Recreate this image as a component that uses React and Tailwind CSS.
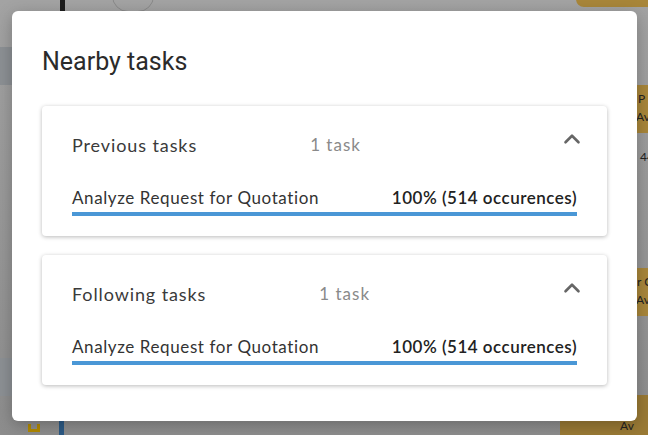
import { ChevronUp } from "lucide-react";

const tasks = [
  { id: "prev", title: "Previous tasks", name: "Analyze Request for Quotation", pct: 100, count: 514 },
  { id: "next", title: "Following tasks", name: "Analyze Request for Quotation", pct: 100, count: 514 },
];

function TaskCard({ t }) {
  return (
    <div className="bg-white rounded-[4px] shadow-[0_1px_4px_rgba(0,0,0,0.28)] px-[30px] pt-[26px] pb-[20px]">
      <div className="flex items-center h-[26px]">
        <div className="text-[18px] tracking-[0.9px] text-[#3a3a3a]">{t.title}</div>
        <div className="ml-[113px] text-[17px] tracking-[1px] text-[#8a8a8a]">1 task</div>
        <ChevronUp className="ml-auto mr-[-8px] mb-[12px] text-[#666]" size={26} strokeWidth={2.4} />
      </div>
      <div className="mt-[30px] flex items-end justify-between text-[17px] leading-[20px]">
        <span className="tracking-[0.6px] text-[#333]">{t.name}</span>
        <span className="font-semibold tracking-[0.5px] text-[#222]">
          {t.pct}% ({t.count} occurences)
        </span>
      </div>
      <div className="mt-[4px] h-[4px] bg-[#e5e5e5]">
        <div className="h-full bg-[#4a97d6]" style={{ width: `${t.pct}%` }} />
      </div>
    </div>
  );
}

export default function App() {
  return (
    <div
      className="relative h-[435px] w-[648px] overflow-hidden bg-gradient-to-b from-[#a3a3a3] to-[#8d8d8d]"
      style={{ fontFamily: "Lato, 'Open Sans', sans-serif" }}
    >
      {/* dimmed app behind the dialog */}
      <div className="absolute left-0 top-[47px] w-[14px] h-[38px] bg-[#8c9094]" />
      <div className="absolute left-0 top-[358px] w-[14px] h-[38px] bg-[#8c9094]" />
      <div className="absolute left-[60px] top-0 w-[5px] h-[12px] bg-[#1c1c1c]" />
      <div className="absolute left-[112px] top-[-20px] w-[42px] h-[32px] rounded-full border border-[#8a8a8a]" />
      <div className="absolute left-[576px] top-[-10px] w-[90px] h-[17px] rounded-[8px] bg-[#a8863a]" />
      <div className="absolute left-[619px] top-[85px] w-[40px] h-[48px] bg-[#a8863a] text-[12px] leading-[18px] pt-[5px] text-[#222]">
        <div className="pl-[19px]">P</div>
        <div className="pl-[17px]">Av</div>
      </div>
      <div className="absolute left-[640px] top-[148px] text-[12px] text-[#222]">44</div>
      <div className="absolute left-[619px] top-[268px] w-[40px] h-[48px] bg-[#a8863a] text-[12px] leading-[18px] pt-[5px] text-[#222]">
        <div className="pl-[18px]">r C</div>
        <div className="pl-[17px]">Av</div>
      </div>
      <div className="absolute left-[560px] top-[395px] w-[100px] h-[45px] bg-[#9a7a35] text-[12px] leading-[18px] pt-[4px] text-[#222]">
        <div className="pl-[60px]">Re</div>
        <div className="pl-[60px]">Av</div>
      </div>
      <div className="absolute left-[59px] top-[420px] w-[5px] h-[15px] bg-[#2c5a85]" />
      <div className="absolute left-[28px] top-[424px] w-[12px] h-[8px] border-b-[3px] border-x-[3px] border-[#b28a00]" />

      {/* dialog */}
      <div className="absolute left-[12px] top-[11px] w-[625px] h-[410px] bg-white rounded-[6px] shadow-[0_4px_16px_rgba(0,0,0,0.25)] px-[30px] pt-[35px]">
        <h2
          className="text-[25px] leading-[32px] text-[#2b2b2b]"
          style={{ fontFamily: "Roboto, sans-serif" }}
        >
          Nearby tasks
        </h2>
        <div className="mt-[28px] flex flex-col gap-[19px]">
          {tasks.map((t) => (
            <TaskCard key={t.id} t={t} />
          ))}
        </div>
      </div>
    </div>
  );
}
